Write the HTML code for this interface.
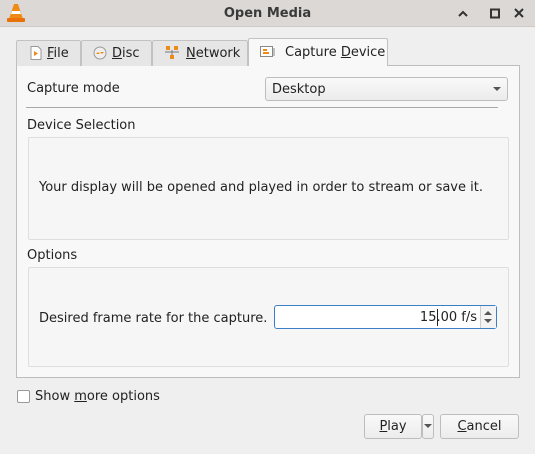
<!DOCTYPE html><html><head><style>
*{margin:0;padding:0;box-sizing:border-box}
body{width:535px;height:454px;background:#efefef;font-family:"DejaVu Sans","Liberation Sans",sans-serif;font-size:13px;color:#222;position:relative;overflow:hidden}
.a{position:absolute}
.title{left:0;top:0;width:535px;height:27px;background:#dcd8d5;border-bottom:1px solid #cfcac6}
.tab{top:40px;height:26px;background:#e6e6e6;border:1px solid #c2c2c2;border-bottom:none;border-radius:2px 2px 0 0;padding:5px 0 0 0}
.pane{left:16px;top:65px;width:504px;height:313px;background:#f8f8f8;border:1px solid #bdbdbd}
.box{background:#f6f6f6;border:1px solid #dedede;border-radius:2px}
.btn{background:linear-gradient(#f9f9f9,#ececec);border:1px solid #bdbdbd;border-radius:3px;text-align:center;line-height:23px}
u{text-decoration:underline}
</style></head><body>
<div class="a title"></div>
<svg class="a" style="left:7px;top:3px" width="18" height="20" viewBox="0 0 18 20"><path d="M7 1h4l5 15H2z" fill="#f08a16"/><path d="M5 8h8l1 3H4z" fill="#fff"/><rect x="0" y="15" width="18" height="4" rx="1" fill="#e8710a"/></svg>
<div class="a" style="left:0;top:6px;width:535px;text-align:center;font-weight:bold;color:#3a3a3a">Open Media</div>
<svg class="a" style="left:458px;top:8px" width="70" height="12" viewBox="0 0 70 12"><path d="M1 8l4-4 4 4" stroke="#333" stroke-width="2" fill="none"/><rect x="33" y="1.5" width="8" height="8" stroke="#333" stroke-width="2" fill="none"/><path d="M57 1l8 8M65 1l-8 8" stroke="#333" stroke-width="2"/></svg>
<div class="a pane"></div>
<div class="a tab" style="left:16px;width:65px"><span style="margin-left:30px"><u>F</u>ile</span></div>
<svg class="a" style="left:30px;top:46px" width="12" height="14"><path d="M1 .5h7l3 3v10H1z" fill="#fff" stroke="#999"/><path d="M4 5l4 2.5-4 2.5z" fill="#f08a16"/></svg>
<div class="a tab" style="left:81px;width:71px"><span style="margin-left:30px"><u>D</u>isc</span></div>
<svg class="a" style="left:93px;top:46px" width="14" height="14"><circle cx="7" cy="7" r="6" fill="#eee" stroke="#999"/><path d="M3 8l2-2 2 2zM7 6l2 2 2-2z" fill="#f08a16"/></svg>
<div class="a tab" style="left:152px;width:96px"><span style="margin-left:33px"><u>N</u>etwork</span></div>
<svg class="a" style="left:165px;top:45px" width="14" height="16"><rect x="1" y="1" width="4" height="4" fill="#f08a16"/><rect x="9" y="1" width="4" height="4" fill="#f08a16"/><rect x="5" y="10" width="4" height="4" fill="#f08a16"/><path d="M0 7h14M7 5v5" stroke="#777"/></svg>
<div class="a tab" style="left:248px;top:38px;height:28px;width:140px;background:#f8f8f8;padding-top:6px"><span style="margin-left:36px">Capture <u>D</u>evice</span></div>
<svg class="a" style="left:260px;top:45px" width="16" height="14"><rect x=".5" y="1.5" width="12" height="10" fill="#fff" stroke="#888"/><rect x="3" y="4" width="4" height="2" fill="#f08a16"/><rect x="3" y="7" width="6" height="2" fill="#f08a16"/><path d="M14 3v8" stroke="#888"/></svg>
<div class="a" style="left:27px;top:81px">Capture mode</div>
<div class="a btn" style="left:265px;top:77px;width:243px;height:24px;text-align:left;padding-left:6px">Desktop</div>
<svg class="a" style="left:493px;top:87px" width="9" height="6"><path d="M0 0h8l-4 4z" fill="#555"/></svg>
<div class="a" style="left:26px;top:107px;width:472px;height:1px;background:#a9a9a9"></div>
<div class="a" style="left:27px;top:118px">Device Selection</div>
<div class="a box" style="left:28px;top:137px;width:481px;height:103px"></div>
<div class="a" style="left:39px;top:180px">Your display will be opened and played in order to stream or save it.</div>
<div class="a" style="left:27px;top:248px">Options</div>
<div class="a box" style="left:28px;top:267px;width:481px;height:100px"></div>
<div class="a" style="left:39px;top:311px">Desired frame rate for the capture.</div>
<div class="a" style="left:274px;top:305px;width:223px;height:24px;background:#fff;border:1px solid #3d7fc4;border-radius:3px"></div>
<div class="a" style="left:274px;top:310px;width:203px;text-align:right">15.00 f/s</div>
<div class="a" style="left:437px;top:309px;width:1px;height:17px;background:#222"></div>
<div class="a" style="left:480px;top:306px;width:16px;height:22px;border-left:1px solid #ccc;background:#f3f3f3"></div>
<svg class="a" style="left:484px;top:310px" width="9" height="15"><path d="M0 5l4-4 4 4zM0 9l4 4 4-4z" fill="#555"/></svg>
<div class="a" style="left:17px;top:390px;width:13px;height:13px;border:1px solid #9a9a9a;background:#fff;border-radius:2px"></div>
<div class="a" style="left:35px;top:389px">Show <u>m</u>ore options</div>
<div class="a btn" style="left:364px;top:414px;width:58px;height:25px"><u>P</u>lay</div>
<div class="a btn" style="left:422px;top:414px;width:12px;height:25px"></div>
<svg class="a" style="left:424px;top:424px" width="9" height="6"><path d="M0 0h8l-4 4z" fill="#555"/></svg>
<div class="a btn" style="left:440px;top:414px;width:79px;height:25px"><u>C</u>ancel</div>
</body></html>
